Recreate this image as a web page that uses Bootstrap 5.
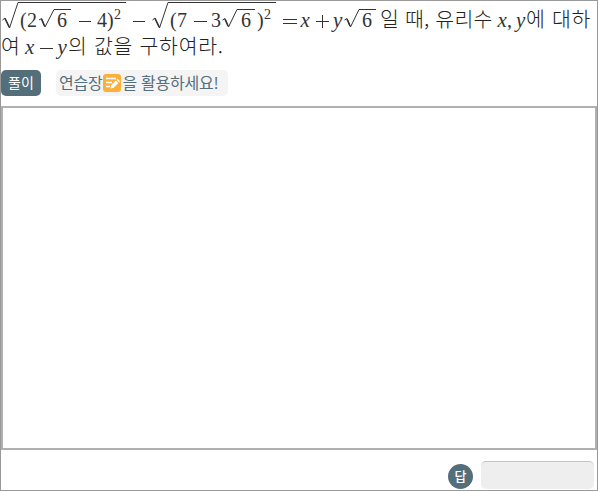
<!DOCTYPE html>
<html lang="ko">
<head>
<meta charset="utf-8">
<title>풀이</title>
<link href="https://cdn.jsdelivr.net/npm/bootstrap@5.3.0/dist/css/bootstrap.min.css" rel="stylesheet">
<style>
body{font-family:"Noto Sans CJK KR",sans-serif;color:#222;background:#fff}
.sheet{width:598px;height:491px;border:1px solid #999}
.question{height:64px;font-weight:300;font-size:20.5px}
.q-line{height:28px;line-height:27px;white-space:pre}
.q-line + .q-line{margin-top:-1px}
.q-line svg{flex:none;display:block}
.q-line svg text{font-family:"Liberation Serif",serif;font-size:20px;fill:#333;font-weight:400}
.q-line .it{font-style:italic;font-size:21px}
.ko1{width:117px;letter-spacing:.2px}
.ko2{width:68px;letter-spacing:.7px}
.ko3{width:22px}
.ko4{letter-spacing:.7px;padding-left:1px}
.root-line{fill:none;stroke:#333;stroke-width:1}
.tag{width:40px;height:26px;line-height:24px;font-size:14px;background:#546e7a;color:#fff;border-radius:5px}
.hint{width:172px;height:26px;font-size:16px;line-height:24px;margin-left:15px;padding-left:3px;background:#f4f4f4;color:#546e7a;border-radius:5px;white-space:nowrap;letter-spacing:-.25px}
.hint span{margin-top:-2px}
.hint svg{margin:0 1px}
.tools{height:41px;padding-top:5px}
.pad{height:344px;border:2px solid #b0b0b0}
.answer{height:40px;padding:11px 3px 0 0}
.dap{width:25px;height:25px;line-height:24px;font-size:13px;font-weight:500;background:#546e7a;color:#fff;margin-top:3px;margin-right:8px}
.answer-box{width:113px;height:28px;background:#eee;border:0;border-top:1px solid #c4c4c4;border-radius:5px;padding:0}
</style>
</head>
<body>
<main class="sheet d-flex flex-column overflow-hidden">
<div class="question">
<div class="q-line d-flex">
<svg width="379" height="36" viewBox="1 1 379 36">
<g class="root-line">
<path d="M2.5 20 5 18 9.5 28 18 2.5H126"/><path d="M5 18.5 9.2 27" stroke-width="1.6"/>
<path d="M39 20 41.5 18.5 45 27 54 9.5H71"/><path d="M41.5 19 44.5 26" stroke-width="1.6"/>
<path d="M152.5 20 155 18 159.5 28 168 2.5H276"/><path d="M155 18.5 159.2 27" stroke-width="1.6"/>
<path d="M222.5 20 225 18.5 228.5 27 237 9.5H255"/><path d="M225 19 228 26" stroke-width="1.6"/>
<path d="M344.5 20 347 18.5 350.5 27 359 9.5H376"/><path d="M347 19 350 26" stroke-width="1.6"/>
<path d="M79 21.5H91M133 21.5H145M194 21.5H207M283 19.5H297M283 23.5H297M316 21.5H329M322.5 15V28"/>
</g>
<text x="20" y="27">(</text><text x="27" y="27">2</text><text x="57" y="27">6</text><text x="97" y="27">4</text><text x="107" y="27">)</text><text x="114" y="19" style="font-size:14px">2</text>
<text x="170" y="27">(</text><text x="177" y="27">7</text><text x="211" y="27">3</text><text x="241" y="27">6</text><text x="257" y="27">)</text><text x="264" y="19" style="font-size:14px">2</text>
<text class="it" x="300.5" y="27">x</text><text class="it" x="333" y="27">y</text><text x="362" y="27">6</text>
</svg><span class="ko1 pt-1">일 때, 유리수</span><svg width="29" height="36" viewBox="497 1 29 36"><text class="it" x="497.5" y="27">x</text><text x="507" y="27">,</text><text class="it" x="516" y="27">y</text></svg><span class="ko2 pt-1">에 대하</span>
</div>
<div class="q-line d-flex"><span class="ko3 pt-1">여</span><svg width="44" height="36" viewBox="23 28 44 36"><path class="root-line" d="M40 48.5H53"/><text class="it" x="25" y="54">x</text><text class="it" x="57.5" y="54">y</text></svg><span class="ko4 pt-1">의 값을 구하여라.</span></div>
</div>
<div class="tools d-flex">
<span class="tag text-center">풀이</span>
<div class="hint d-flex align-items-center"><span>연습장</span>
<svg class="flex-shrink-0" width="18" height="18" viewBox="0 0 18 18"><rect width="18" height="18" rx="3" fill="#fbb03b"/><path d="M3 4.500H13M3 8.500H9M3 12.500H7" stroke="#fff" stroke-width="1.500"/><path d="M7.500 14.500 8.200 11.200 12.800 6.500 15.300 9 10.700 13.700ZM13.500 5.800 14.500 4.800 17 7.300 16 8.300Z" fill="#fff"/></svg>
<span>을 활용하세요!</span></div>
</div>
<div class="pad"></div>
<div class="answer d-flex justify-content-end"><span class="dap rounded-circle text-center">답</span><input class="answer-box" type="text" aria-label="답"></div>
</main>
<script src="https://cdn.jsdelivr.net/npm/bootstrap@5.3.0/dist/js/bootstrap.bundle.min.js"></script>
</body>
</html>
